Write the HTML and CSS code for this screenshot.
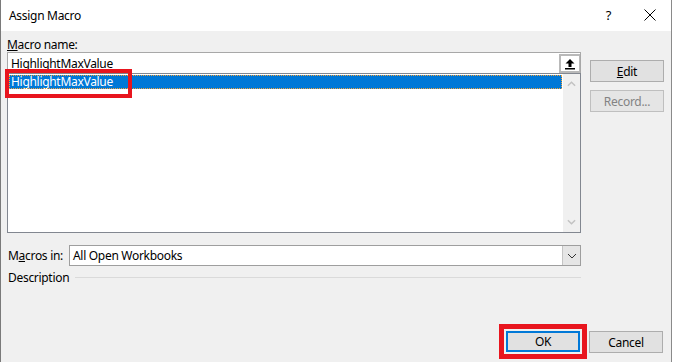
FILE: index.html
```html
<!DOCTYPE html>
<html lang="en">
<head>
    <meta charset="UTF-8">
    <title>Assign Macro</title>
    <link rel="stylesheet" href="styles.css">
</head>
<body>
    <div class="dialog">
        <div class="titlebar">
            <span class="title">Assign Macro</span>
            <span class="help">?</span>
            <svg class="close" viewBox="0 0 12 12">
                <path d="M0.5 0.5 L11.5 11.5 M11.5 0.5 L0.5 11.5" stroke="#000" stroke-width="1" fill="none"/>
            </svg>
        </div>

        <div class="content">
            <div class="top">
                <div class="main">
                    <div class="label"><u>M</u>acro name:</div>
                    <div class="name-input">
                        <span class="value">HighlightMaxValue</span>
                        <span class="collapse-btn">
                            <svg viewBox="0 0 12 12">
                                <path d="M6 1 L1.5 5.5 H4.5 V9 H7.5 V5.5 H10.5 Z" fill="#000"/>
                                <rect x="1" y="10" width="10" height="1.5" fill="#000"/>
                            </svg>
                        </span>
                    </div>
                    <div class="list">
                        <div class="items">
                            <div class="item selected">HighlightMaxValue</div>
                        </div>
                        <div class="scrollbar">
                            <svg viewBox="0 0 10 6"><path d="M1 5 L5 1 L9 5" stroke="#c2c2c2" stroke-width="1.6" fill="none"/></svg>
                            <svg viewBox="0 0 10 6"><path d="M1 1 L5 5 L9 1" stroke="#c2c2c2" stroke-width="1.6" fill="none"/></svg>
                        </div>
                        <div class="callout"></div>
                    </div>
                </div>
                <div class="side">
                    <button class="btn"><u>E</u>dit</button>
                    <button class="btn" disabled>Record...</button>
                </div>
            </div>

            <div class="macros-in">
                <span class="label">M<u>a</u>cros in:</span>
                <div class="combo">
                    <span class="value">All Open Workbooks</span>
                    <span class="drop">
                        <svg viewBox="0 0 10 6"><path d="M1 1 L5 5 L9 1" stroke="#333" stroke-width="1" fill="none"/></svg>
                    </span>
                </div>
            </div>

            <div class="description">
                <span class="label">Description</span>
                <span class="rule"></span>
            </div>

            <div class="footer">
                <div class="ok-mark">
                    <button class="btn default">OK</button>
                </div>
                <button class="btn">Cancel</button>
            </div>
        </div>
    </div>
</body>
</html>
```

FILE: styles.css
```css
* {
    margin: 0;
    padding: 0;
    box-sizing: border-box;
}

body {
    background: #fff;
    font-family: 'Noto Sans', 'Segoe UI', sans-serif;
    font-size: 12px;
    letter-spacing: -0.3px;
    color: #000;
}

.dialog {
    width: 672px;
    height: 362px;
    background: #f0f0f0;
    border-left: 1px solid #7a7a7a;
    border-right: 1px solid #8a8a8a;
    display: flex;
    flex-direction: column;
}

.titlebar {
    height: 31px;
    background: #fff;
    display: flex;
    align-items: center;
    padding-left: 8px;
}

.title {
    flex: 1;
    font-size: 12px;
    margin-top: -1px;
}

.help {
    font-size: 13px;
    margin-right: 33px;
    margin-top: -1px;
}

.close {
    width: 12px;
    height: 12px;
    margin-right: 15px;
    margin-top: -1px;
}

.content {
    flex: 1;
    padding: 6px 7px 0 6px;
    display: flex;
    flex-direction: column;
}

.top {
    display: flex;
    gap: 9px;
}

.main {
    width: 574px;
}

.label {
    line-height: 15px;
    height: 15px;
}

.name-input {
    height: 21px;
    background: #fff;
    border: 1px solid #a8a8a8;
    border-bottom: none;
    display: flex;
    align-items: center;
    justify-content: space-between;
    padding-left: 3px;
}

.collapse-btn {
    width: 21px;
    height: 19px;
    margin-top: 1px;
    border: 2px solid #b9b9b9;
    border-right-width: 1px;
    background: #fff;
    display: flex;
    align-items: center;
    justify-content: center;
}

.collapse-btn svg {
    width: 12px;
    height: 12px;
}

.list {
    position: relative;
    height: 160px;
    background: #fff;
    border: 1px solid #828790;
    display: flex;
}

.items {
    flex: 1;
    padding: 1px 1px 0 1px;
}

.item {
    height: 14px;
    line-height: 13px;
    padding-left: 2px;
}

.item.selected {
    background: #0078d7;
    color: #fff;
    outline: 1px dotted #f2a33c;
    outline-offset: -1px;
}

.scrollbar {
    width: 17px;
    background: #f0f0f0;
    display: flex;
    flex-direction: column;
    justify-content: space-between;
    align-items: center;
    padding: 7px 0 7px;
}

.scrollbar svg {
    width: 9px;
    height: 6px;
}

/* red highlight drawn over the selected entry */
.callout {
    position: absolute;
    left: -3px;
    top: -5px;
    width: 127px;
    height: 29px;
    border: 4px solid #e8151e;
}

.side {
    padding-top: 23px;
    display: flex;
    flex-direction: column;
    gap: 8px;
}

.btn {
    width: 74px;
    height: 22px;
    font-family: inherit;
    font-size: 12px;
    letter-spacing: inherit;
    background: #e1e1e1;
    border: 1px solid #adadad;
    color: #000;
}

.btn:disabled {
    color: #838383;
    background: #e5e5e5;
    border-color: #bfbfbf;
}

.btn.default {
    border: 2px solid #0078d7;
    height: 21px;
}

.macros-in {
    margin-top: 12px;
    display: flex;
    align-items: center;
    width: 574px;
}

.macros-in .label {
    width: 62px;
    padding-left: 1px;
}

.combo {
    flex: 1;
    height: 21px;
    background: #fff;
    border: 1px solid #9e9e9e;
    display: flex;
    align-items: center;
    justify-content: space-between;
    padding-left: 3px;
}

.drop {
    width: 18px;
    height: 19px;
    background: #e5e5e5;
    border-left: 1px solid #c4c4c4;
    display: flex;
    align-items: center;
    justify-content: center;
}

.drop svg {
    width: 10px;
    height: 6px;
}

.description {
    margin-top: 4px;
    width: 574px;
    display: flex;
    align-items: center;
    gap: 6px;
}

.description .label {
    padding-left: 1px;
}

.rule {
    flex: 1;
    height: 1px;
    background: #dadada;
}

.footer {
    margin-top: auto;
    margin-bottom: 3px;
    display: flex;
    justify-content: flex-end;
    align-items: center;
    gap: 2px;
    padding-right: 1px;
}

.ok-mark {
    border: 5px solid #e8151e;
    padding: 2px;
}

.footer > .btn {
    margin-top: 1px;
}
```
